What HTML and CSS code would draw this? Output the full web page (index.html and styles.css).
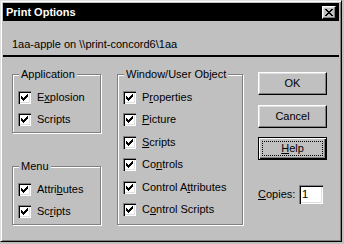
FILE: index.html
```html
<!DOCTYPE html>
<html lang="en">
<head>
    <meta charset="UTF-8">
    <title>Print Options</title>
    <link rel="stylesheet" href="styles.css">
</head>
<body>
    <div class="window">
        <div class="titlebar">
            <span>Print Options</span>
            <span class="close">
                <svg width="8" height="7" viewBox="0 0 8 7"><path d="M0 0h2v1h-2z M6 0h2v1h-2z M1 1h2v1h-2z M5 1h2v1h-2z M2 2h4v1h-4z M3 3h2v1h-2z M2 4h4v1h-4z M1 5h2v1h-2z M5 5h2v1h-2z M0 6h2v1h-2z M6 6h2v1h-2z" fill="#000"/></svg>
            </span>
        </div>
        <div class="printer">1aa-apple on \\print-concord6\1aa</div>
        <div class="divider"></div>

        <div class="content">
            <div class="left-col">
                <div class="group">
                    <div class="group-title">Application</div>
                    <div class="checks">
                        <div class="check"><span class="box"><svg width="13" height="13" viewBox="0 0 13 13"><path d="M9 3h1v1h-1z M8 4h2v1h-2z M3 5h1v1h-1z M7 5h3v1h-3z M3 6h2v1h-2z M6 6h3v1h-3z M3 7h5v1h-5z M4 8h3v1h-3z M5 9h1v1h-1z"/></svg></span><span>E<u>x</u>plosion</span></div>
                        <div class="check"><span class="box"><svg width="13" height="13" viewBox="0 0 13 13"><path d="M9 3h1v1h-1z M8 4h2v1h-2z M3 5h1v1h-1z M7 5h3v1h-3z M3 6h2v1h-2z M6 6h3v1h-3z M3 7h5v1h-5z M4 8h3v1h-3z M5 9h1v1h-1z"/></svg></span><span>Scripts</span></div>
                    </div>
                </div>
                <div class="group group-menu">
                    <div class="group-title">Menu</div>
                    <div class="checks">
                        <div class="check"><span class="box"><svg width="13" height="13" viewBox="0 0 13 13"><path d="M9 3h1v1h-1z M8 4h2v1h-2z M3 5h1v1h-1z M7 5h3v1h-3z M3 6h2v1h-2z M6 6h3v1h-3z M3 7h5v1h-5z M4 8h3v1h-3z M5 9h1v1h-1z"/></svg></span><span>Attri<u>b</u>utes</span></div>
                        <div class="check"><span class="box"><svg width="13" height="13" viewBox="0 0 13 13"><path d="M9 3h1v1h-1z M8 4h2v1h-2z M3 5h1v1h-1z M7 5h3v1h-3z M3 6h2v1h-2z M6 6h3v1h-3z M3 7h5v1h-5z M4 8h3v1h-3z M5 9h1v1h-1z"/></svg></span><span>Sc<u>r</u>ipts</span></div>
                    </div>
                </div>
            </div>

            <div class="group group-window">
                <div class="group-title">Window/User Object</div>
                <div class="checks checks-window">
                    <div class="check"><span class="box"><svg width="13" height="13" viewBox="0 0 13 13"><path d="M9 3h1v1h-1z M8 4h2v1h-2z M3 5h1v1h-1z M7 5h3v1h-3z M3 6h2v1h-2z M6 6h3v1h-3z M3 7h5v1h-5z M4 8h3v1h-3z M5 9h1v1h-1z"/></svg></span><span>P<u>r</u>operties</span></div>
                    <div class="check"><span class="box"><svg width="13" height="13" viewBox="0 0 13 13"><path d="M9 3h1v1h-1z M8 4h2v1h-2z M3 5h1v1h-1z M7 5h3v1h-3z M3 6h2v1h-2z M6 6h3v1h-3z M3 7h5v1h-5z M4 8h3v1h-3z M5 9h1v1h-1z"/></svg></span><span><u>P</u>icture</span></div>
                    <div class="check"><span class="box"><svg width="13" height="13" viewBox="0 0 13 13"><path d="M9 3h1v1h-1z M8 4h2v1h-2z M3 5h1v1h-1z M7 5h3v1h-3z M3 6h2v1h-2z M6 6h3v1h-3z M3 7h5v1h-5z M4 8h3v1h-3z M5 9h1v1h-1z"/></svg></span><span><u>S</u>cripts</span></div>
                    <div class="check"><span class="box"><svg width="13" height="13" viewBox="0 0 13 13"><path d="M9 3h1v1h-1z M8 4h2v1h-2z M3 5h1v1h-1z M7 5h3v1h-3z M3 6h2v1h-2z M6 6h3v1h-3z M3 7h5v1h-5z M4 8h3v1h-3z M5 9h1v1h-1z"/></svg></span><span>Co<u>n</u>trols</span></div>
                    <div class="check"><span class="box"><svg width="13" height="13" viewBox="0 0 13 13"><path d="M9 3h1v1h-1z M8 4h2v1h-2z M3 5h1v1h-1z M7 5h3v1h-3z M3 6h2v1h-2z M6 6h3v1h-3z M3 7h5v1h-5z M4 8h3v1h-3z M5 9h1v1h-1z"/></svg></span><span>Control A<u>t</u>tributes</span></div>
                    <div class="check"><span class="box"><svg width="13" height="13" viewBox="0 0 13 13"><path d="M9 3h1v1h-1z M8 4h2v1h-2z M3 5h1v1h-1z M7 5h3v1h-3z M3 6h2v1h-2z M6 6h3v1h-3z M3 7h5v1h-5z M4 8h3v1h-3z M5 9h1v1h-1z"/></svg></span><span>C<u>o</u>ntrol Scripts</span></div>
                </div>
            </div>

            <div class="buttons">
                <button class="btn">OK</button>
                <button class="btn">Cancel</button>
                <button class="btn btn-default"><span class="focus"><u>H</u>elp</span></button>
                <div class="copies">
                    <span class="copies-label"><u>C</u>opies:</span>
                    <span class="copies-input">1</span>
                </div>
            </div>
        </div>
    </div>
</body>
</html>
```

FILE: styles.css
```css
body {
    margin: 0;
    background-color: #c0c0c0;
    color: #000;
    font-family: "Liberation Sans", Arial, sans-serif;
    font-size: 11px;
    line-height: 13px;
}
.window {
    width: 342px;
    height: 242px;
    box-sizing: border-box;
    padding: 2px;
    border: 1px solid;
    border-color: #dfdfdf #000 #000 #dfdfdf;
    box-shadow: inset 1px 1px #fff, inset -1px -1px #808080;
}
.titlebar {
    height: 18px;
    padding: 0 3px;
    background-color: #000;
    color: #fff;
    font-weight: bold;
    display: flex;
    align-items: center;
    justify-content: space-between;
}
.close {
    width: 14px;
    height: 13px;
    box-sizing: border-box;
    background-color: #c0c0c0;
    border: 1px solid;
    border-color: #fff #000 #000 #fff;
    box-shadow: inset -1px -1px #808080, inset 1px 1px #dfdfdf;
    display: flex;
    align-items: center;
    justify-content: center;
}
.close svg {
    display: block;
}
.printer {
    margin-top: 17px;
    padding-left: 9px;
}
.divider {
    height: 2px;
    margin-top: 4px;
    background-color: #000;
}
.content {
    display: flex;
    padding: 15px 0 0 9px;
}
.left-col {
    width: 89px;
    margin-top: 2px;
    display: flex;
    flex-direction: column;
}
.group {
    box-sizing: border-box;
    padding: 0 5px 6px;
    border: 1px solid #808080;
    box-shadow: inset 1px 1px #fff, 1px 1px #fff;
}
.group-menu {
    margin-top: 33px;
}
.group-window {
    width: 126px;
    margin: 2px 0 0 16px;
}
.group-title {
    display: table;
    margin: -7px 0 0 1px;
    padding: 0 2px;
    background-color: #c0c0c0;
}
.checks {
    display: flex;
    flex-direction: column;
    gap: 9px;
    margin-top: 10px;
}
.checks-window {
    gap: 9.4px;
}
.check {
    height: 13px;
    display: flex;
    align-items: center;
    gap: 6px;
    white-space: nowrap;
}
.box {
    flex: none;
    width: 13px;
    height: 13px;
    background-color: #fff;
    box-shadow: inset 1px 1px #808080, inset 2px 2px #000, inset -1px -1px #fff, inset -2px -2px #dfdfdf;
}
.box svg {
    display: block;
}
u {
    text-underline-offset: 1px;
}
.buttons {
    width: 69px;
    margin-left: 15px;
    display: flex;
    flex-direction: column;
    gap: 10px;
}
.btn {
    height: 23px;
    margin: 0;
    padding: 0;
    font: inherit;
    color: #000;
    background-color: #c0c0c0;
    border: 1px solid;
    border-color: #fff #000 #000 #fff;
    box-shadow: inset -1px -1px #808080, inset 1px 1px #dfdfdf;
}
.btn-default {
    margin-top: -1px;
    padding: 3px;
    display: flex;
    border-color: #000;
    box-shadow: inset 1px 1px #fff, inset -1px -1px #000, inset -2px -2px #808080;
}
.focus {
    flex: 1;
    display: flex;
    align-items: center;
    justify-content: center;
    border: 1px dotted #000;
}
.copies {
    margin-top: 15px;
    display: flex;
    align-items: center;
}
.copies-label {
    width: 41px;
}
.copies-input {
    width: 24px;
    height: 19px;
    box-sizing: border-box;
    padding-left: 3px;
    line-height: 19px;
    background-color: #fff;
    box-shadow: inset 1px 1px #808080, inset 2px 2px #000, inset -1px -1px #fff, inset -2px -2px #dfdfdf;
}
```
